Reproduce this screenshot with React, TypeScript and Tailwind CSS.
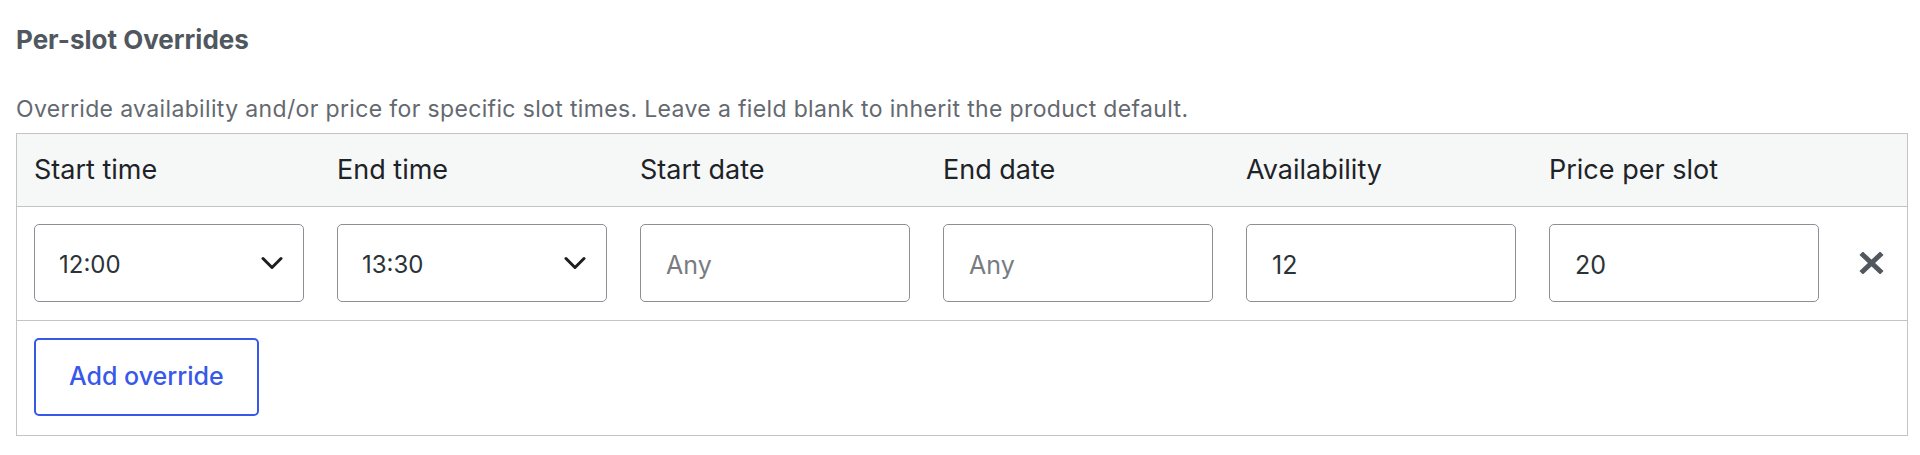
import React from 'react';

const font = { fontFamily: 'Inter, "Liberation Sans", sans-serif' };

const Chevron = () => (
  <svg width="22" height="13" viewBox="0 0 22 13" fill="none" className="pointer-events-none absolute right-[21px] top-1/2 -translate-y-1/2">
    <path d="M2 2l9 9 9-9" stroke="#1e1e1e" strokeWidth="3" strokeLinecap="round" strokeLinejoin="round" />
  </svg>
);

const TimeSelect = ({ value, options }: { value: string; options: string[] }) => (
  <div className="relative w-[270px]">
    <select
      defaultValue={value}
      className="h-[78px] w-full appearance-none rounded-[5px] border border-[#8c8f94] bg-white pl-[24px] pt-[3px] text-[24px] text-[#2c3338] outline-none"
      style={font}
    >
      {options.map(o => (
        <option key={o} value={o}>{o}</option>
      ))}
    </select>
    <Chevron />
  </div>
);

const TextField = ({ value, placeholder }: { value?: string; placeholder?: string }) => (
  <input
    type="text"
    defaultValue={value}
    placeholder={placeholder}
    className="h-[78px] w-[270px] rounded-[5px] border border-[#8c8f94] bg-white pl-[25px] pt-[3px] text-[25px] text-[#2c3338] outline-none placeholder:text-[#787c82]"
    style={font}
  />
);

const headers = ['Start time', 'End time', 'Start date', 'End date', 'Availability', 'Price per slot'];
const times = ['11:00', '11:30', '12:00', '12:30', '13:00', '13:30', '14:00'];

export default function App() {
  return (
    <div className="h-[455px] w-full bg-white pl-[16px] pr-[12px] pt-[25px]" style={font}>
      <h3 className="text-[26px] font-bold leading-[30px] text-[#50575e]">Per-slot Overrides</h3>
      <p className="mt-[41px] text-[23px] leading-[26px] tracking-[0.35px] text-[#646970]">
        Override availability and/or price for specific slot times. Leave a field blank to inherit the product default.
      </p>

      <div className="mt-[11px] border border-[#c3c4c7]">
        {/* header */}
        <div className="grid h-[73px] grid-cols-[repeat(6,270px)_1fr] items-center gap-x-[33px] border-b border-[#c3c4c7] bg-[#f6f7f7] pl-[17px]">
          {headers.map(h => (
            <div key={h} className="text-[27px] leading-[32px] text-[#1d2327]">{h}</div>
          ))}
          <div />
        </div>

        {/* override row */}
        <div className="grid grid-cols-[repeat(6,270px)_1fr] items-center gap-x-[33px] border-b border-[#c3c4c7] pb-[18px] pl-[17px] pt-[17px]">
          <TimeSelect value="12:00" options={times} />
          <TimeSelect value="13:30" options={times} />
          <TextField placeholder="Any" />
          <TextField placeholder="Any" />
          <TextField value="12" />
          <TextField value="20" />
          <button type="button" aria-label="Remove override" className="ml-[7px] flex h-[25px] w-[25px] items-center justify-center">
            <svg width="25" height="22" viewBox="0 0 25 22" fill="none">
              <path d="M4 3l17 16M21 3L4 19" stroke="#50575e" strokeWidth="5" strokeLinecap="square" />
            </svg>
          </button>
        </div>

        {/* footer */}
        <div className="pb-[19px] pl-[17px] pt-[17px]">
          <button
            type="button"
            className="h-[78px] rounded-[5px] border-2 border-[#3858e9] bg-white px-[33px] text-[25px] font-medium text-[#3858e9]"
            style={font}
          >
            Add override
          </button>
        </div>
      </div>
    </div>
  );
}
